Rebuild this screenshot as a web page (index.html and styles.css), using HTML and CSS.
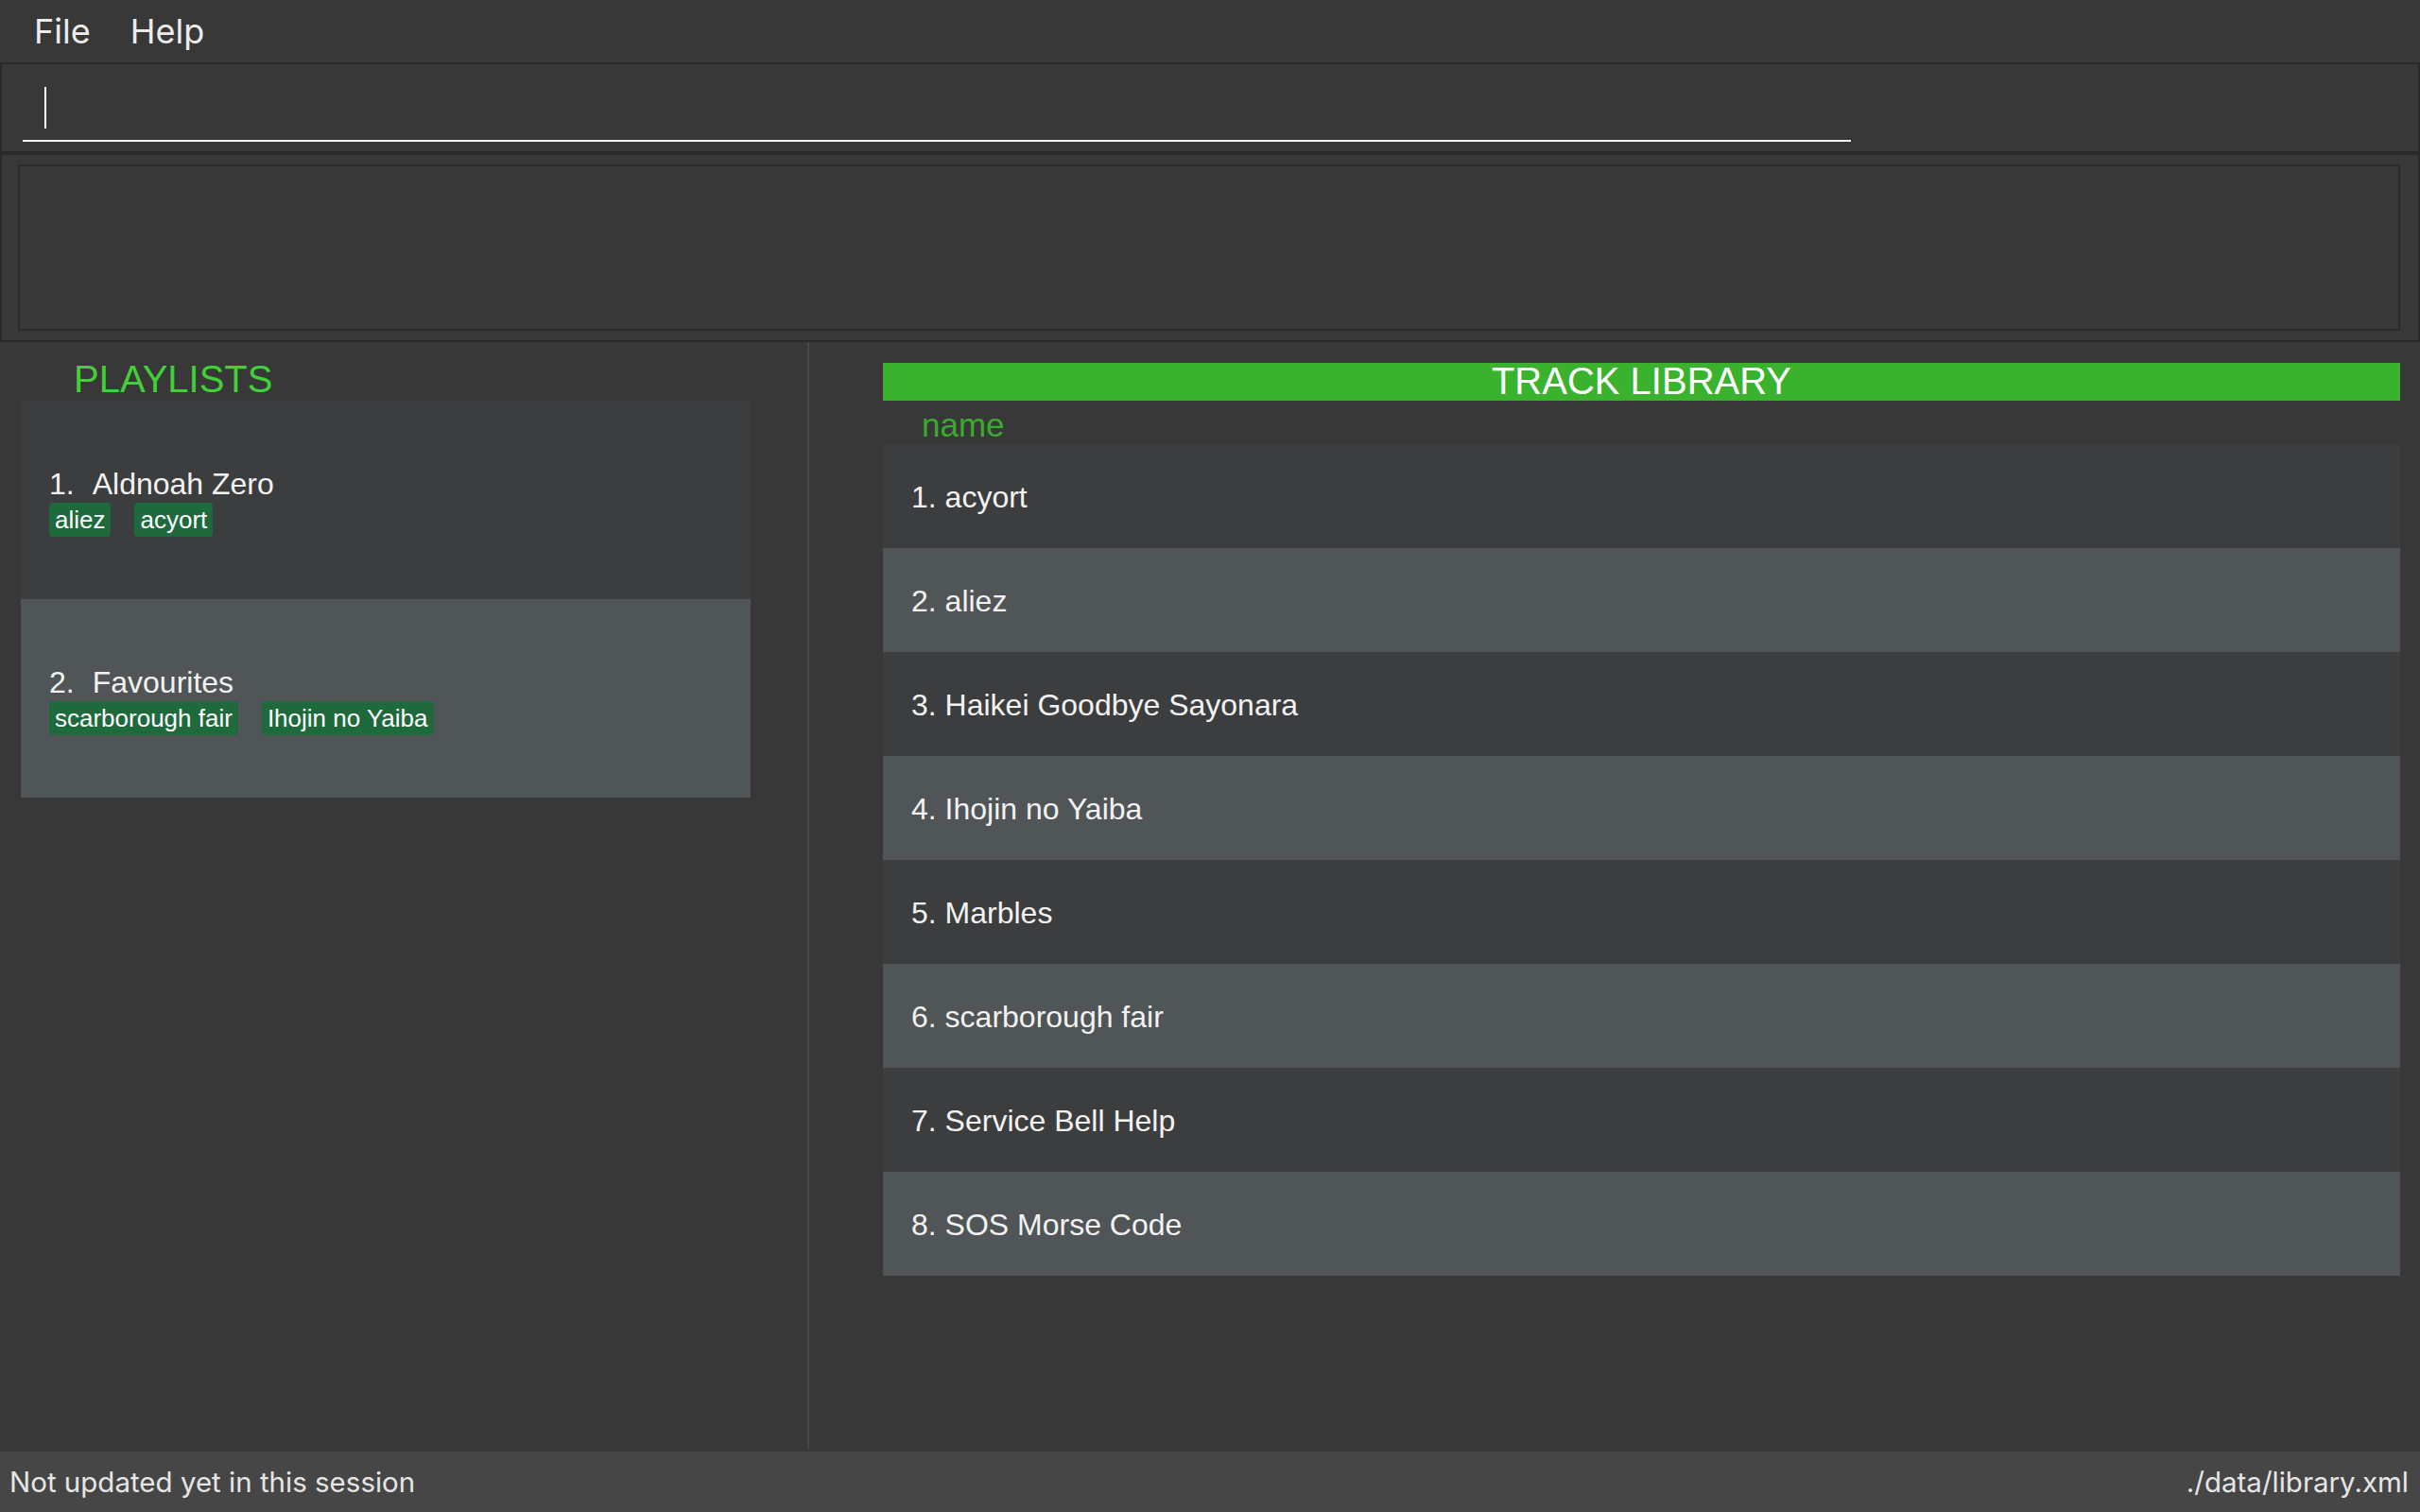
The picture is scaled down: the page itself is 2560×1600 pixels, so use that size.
FILE: index.html
```html
<!DOCTYPE html>
<html>
<head>
<meta charset="utf-8">
<link rel="stylesheet" href="styles.css">
</head>
<body>
<div class="app">
  <div class="menubar">
    <span class="menu-item">File</span>
    <span class="menu-item">Help</span>
  </div>
  <div class="command-panel">
    <div class="command-field"><span class="caret"></span></div>
  </div>
  <div class="result-panel">
    <div class="result-box"></div>
  </div>
  <div class="main">
    <div class="left-panel">
      <div class="playlists-title">PLAYLISTS</div>
      <div class="playlist-list">
        <div class="playlist-card odd">
          <div class="playlist-name"><span class="num">1.</span><span>Aldnoah Zero</span></div>
          <div class="tags"><span class="tag">aliez</span><span class="tag">acyort</span></div>
        </div>
        <div class="playlist-card even">
          <div class="playlist-name"><span class="num">2.</span><span>Favourites</span></div>
          <div class="tags"><span class="tag">scarborough fair</span><span class="tag">Ihojin no Yaiba</span></div>
        </div>
      </div>
    </div>
    <div class="divider"></div>
    <div class="right-panel">
      <div class="library-bar"><span class="bar-title">TRACK LIBRARY</span></div>
      <div class="column-header">name</div>
      <div class="track-list">
        <div class="track odd">1. acyort</div>
        <div class="track even">2. aliez</div>
        <div class="track odd">3. Haikei Goodbye Sayonara</div>
        <div class="track even">4. Ihojin no Yaiba</div>
        <div class="track odd">5. Marbles</div>
        <div class="track even">6. scarborough fair</div>
        <div class="track odd">7. Service Bell Help</div>
        <div class="track even">8. SOS Morse Code</div>
      </div>
    </div>
  </div>
  <div class="statusbar">
    <span>Not updated yet in this session</span>
    <span>./data/library.xml</span>
  </div>
</div>
</body>
</html>
```
FILE: styles.css
```css
* { box-sizing: border-box; }
html, body { margin: 0; padding: 0; }
body {
  background: #383838;
  font-family: "Liberation Sans", Arial, sans-serif;
  color: #f0f0f0;
}
.app {
  width: 2560px;
  height: 1600px;
  display: flex;
  flex-direction: column;
  overflow: hidden;
}
.menubar {
  height: 66px;
  flex: none;
  display: flex;
  align-items: center;
  padding-left: 36px;
  gap: 42px;
  font-family: "Inter", "Open Sans", sans-serif;
  font-size: 36px;
  color: #ececec;
}
.command-panel {
  height: 96px;
  flex: none;
  border: 2px solid #292929;
  padding-left: 22px;
}
.command-field {
  width: 1934px;
  height: 82px;
  border-bottom: 2px solid #ffffff;
  padding-top: 24px;
  padding-left: 23px;
}
.caret {
  display: block;
  width: 2px;
  height: 44px;
  background: #ffffff;
}
.result-panel {
  height: 200px;
  flex: none;
  border: 2px solid #292929;
  padding: 10px 19px 10px 17px;
}
.result-box {
  height: 176px;
  border: 2px solid #2a2a2a;
  background: #393939;
}
.main {
  flex: 1;
  display: flex;
  min-height: 0;
}
.left-panel {
  width: 854px;
  flex: none;
  padding-top: 16px;
}
.playlists-title {
  margin-left: 78px;
  font-size: 40px;
  line-height: 46px;
  color: #42cf37;
}
.playlist-list {
  margin-left: 22px;
  width: 772px;
}
.playlist-card {
  height: 210px;
  display: flex;
  flex-direction: column;
  justify-content: center;
  padding-left: 30px;
  padding-top: 4px;
}
.odd { background: #3c3d3f; }
.even { background: #505557; }
.playlist-name {
  font-size: 32px;
  line-height: 37px;
  color: #f2f2f2;
}
.playlist-name .num { margin-right: 19px; }
.tags {
  display: flex;
  gap: 25px;
  margin-top: 1px;
}
.tag {
  background: #1e6a3d;
  color: #ffffff;
  font-size: 26px;
  line-height: 36px;
  height: 36px;
  padding: 0 6px;
  border-radius: 4px;
}
.divider {
  width: 2px;
  flex: none;
  background: #474747;
  margin-bottom: 3px;
}
.right-panel {
  flex: 1;
  padding: 22px 21px 0 78px;
}
.library-bar {
  height: 40px;
  background: #3bb22e;
  display: flex;
  justify-content: center;
  align-items: center;
}
.bar-title {
  color: #ffffff;
  font-size: 40px;
  line-height: 40px;
  margin-top: -2px;
}
.column-header {
  height: 46px;
  padding-left: 41px;
  font-size: 35px;
  line-height: 52px;
  color: #3bab2e;
}
.track {
  height: 110px;
  display: flex;
  align-items: center;
  padding-left: 30px;
  padding-top: 3px;
  font-size: 32px;
  color: #f2f2f2;
}
.statusbar {
  height: 64px;
  flex: none;
  background: #464646;
  display: flex;
  justify-content: space-between;
  align-items: center;
  padding: 0 12px 0 10px;
  font-family: "Inter", "Open Sans", sans-serif;
  font-size: 29.5px;
  color: #e6e6e6;
}
```
